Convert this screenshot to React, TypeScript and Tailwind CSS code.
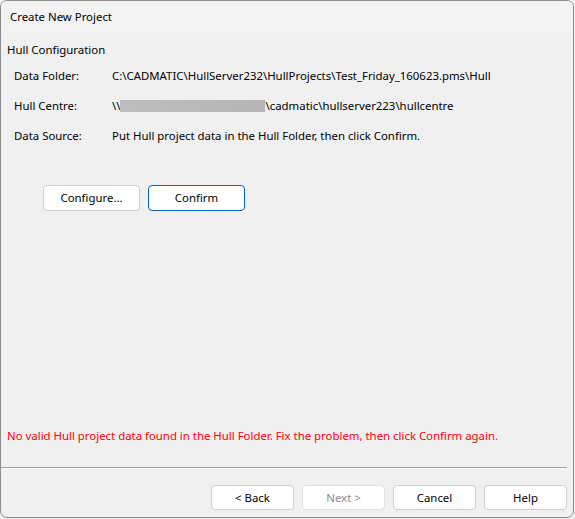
import React from "react";

const font = { fontFamily: '"Noto Sans", "Segoe UI", sans-serif' };

function Btn({ children, className = "" }: { children: React.ReactNode; className?: string }) {
  return (
    <div
      className={`flex items-center justify-center rounded-[4px] border bg-white text-[11.4px] ${className}`}
    >
      {children}
    </div>
  );
}

export default function App() {
  return (
    <div className="w-[575px] h-[519px] bg-[#f0f0f0]" style={font}>
      <div className="w-[574px] h-[518px] rounded-[7px] border border-[#8c8c8c] overflow-hidden flex flex-col bg-[#f0f0f0] text-[11.4px] text-black leading-none">
        <div className="h-[31px] shrink-0 bg-[#f3f3f3] flex items-center pl-[9px]">
          <span>Create New Project</span>
        </div>
        <div className="flex-1 flex flex-col">
          <div className="pl-[6px] h-[36px] flex items-center">Hull Configuration</div>
          <div className="pl-[13px] flex flex-col -mt-[7px]">
            <div className="flex items-center h-[30px]">
              <span className="w-[98px]">Data Folder:</span>
              <span>C:\CADMATIC\HullServer232\HullProjects\Test_Friday_160623.pms\Hull</span>
            </div>
            <div className="flex items-center h-[30px]">
              <span className="w-[98px]">Hull Centre:</span>
              <span className="flex items-center">
                <span>\\</span>
                <span className="inline-block w-[145px] h-[12px] bg-gradient-to-r from-[#bdbdbd] to-[#b5b5b5]" />
                <span>\cadmatic\hullserver223\hullcentre</span>
              </span>
            </div>
            <div className="flex items-center h-[30px]">
              <span className="w-[98px]">Data Source:</span>
              <span>Put Hull project data in the Hull Folder, then click Confirm.</span>
            </div>
          </div>
          <div className="flex gap-[8px] pl-[42px] mt-[34px]">
            <Btn className="w-[97px] h-[26px] border-[#d0d0d0]">Configure...</Btn>
            <Btn className="w-[97px] h-[26px] border-[#0067c0]">Confirm</Btn>
          </div>
          <div className="flex-1" />
          <div className="pl-[6px] text-[#ff0000] h-[20px] flex items-center mb-[21px]">
            No valid Hull project data found in the Hull Folder. Fix the problem, then click Confirm again.
          </div>
          <div className="h-[1px] bg-[#a0a0a0] mr-[6px]" />
          <div className="h-[1px] bg-white mr-[6px]" />
          <div className="flex justify-end gap-[8px] pr-[6px] pt-[16px] pb-[7px]">
            <Btn className="w-[83px] h-[25px] border-[#d0d0d0]">&lt; Back</Btn>
            <Btn className="w-[83px] h-[25px] border-[#e0e0e0] bg-[#f5f5f5] text-[#8a8a8a]">Next &gt;</Btn>
            <Btn className="w-[83px] h-[25px] border-[#d0d0d0]">Cancel</Btn>
            <Btn className="w-[83px] h-[25px] border-[#d0d0d0]">Help</Btn>
          </div>
        </div>
      </div>
    </div>
  );
}
